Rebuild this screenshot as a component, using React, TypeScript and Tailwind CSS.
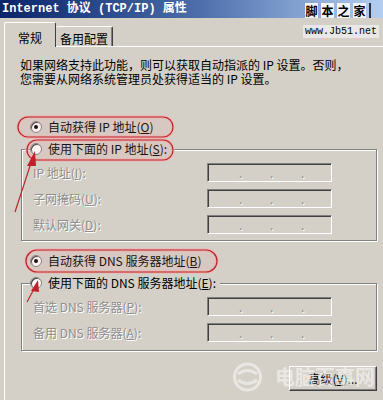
import React from 'react'

const DIS = "text-[#8e8e8e] [text-shadow:1px_1px_0_#ffffff]"

function Radio({ checked = false }: { checked?: boolean }) {
  return (
    <span className="w-[12px] h-[12px] shrink-0 rounded-full bg-white border border-[#808080] shadow-[inset_1px_1px_0_#404040] flex items-center justify-center">
      {checked && <span className="w-[4px] h-[4px] rounded-full bg-black" />}
    </span>
  )
}

function RadioRow({ checked, children }: { checked?: boolean; children: React.ReactNode }) {
  return (
    <div className="h-[20px] flex items-center gap-[6px]">
      <Radio checked={checked} />
      <span className="whitespace-nowrap">{children}</span>
    </div>
  )
}

function IpBox() {
  return (
    <div className="w-[125px] h-[19px] bg-[#d4d0c8] border-t border-l border-[#808080] border-r border-b border-r-white border-b-white shadow-[inset_1px_1px_0_#404040] flex items-center pl-[31px] gap-[27px]">
      {[0, 1, 2].map(i => (
        <span key={i} className={`w-[4px] text-[12px] leading-none ${DIS}`}>.</span>
      ))}
    </div>
  )
}

function Field({ label }: { label: React.ReactNode }) {
  return (
    <div className="flex items-center">
      <span className={`w-[174px] whitespace-nowrap ${DIS}`}>{label}</span>
      <IpBox />
    </div>
  )
}

function Group({ legend, children, bottom }: { legend: React.ReactNode; children: React.ReactNode; bottom: string }) {
  return (
    <fieldset className={`ml-[1px] w-[356px] border border-[#808080] shadow-[inset_1px_1px_0_#ffffff,1px_1px_0_#ffffff] pl-[8px] ${bottom}`}>
      <legend className="bg-[#d4d0c8] pr-[4px]">
        <RadioRow>{legend}</RadioRow>
      </legend>
      <div className="mt-[4px] pl-[3px] flex flex-col gap-[7px]">{children}</div>
    </fieldset>
  )
}

export default function App() {
  return (
    <div className="relative w-[383px] h-[400px] overflow-hidden bg-[#d4d0c8] text-[12px] leading-[14px] text-black font-['Noto_Sans_CJK_SC',sans-serif]">
      {/* title bar */}
      <div className="h-[18px] flex items-center pl-[2px] bg-gradient-to-r from-[#0a246a] via-[#4a6aa8] to-[#b4cff0]">
        <span className="text-white font-bold text-[12px] whitespace-nowrap font-['Liberation_Mono','Noto_Sans_CJK_SC',monospace]">
          Internet 协议 (TCP/IP) 属性
        </span>
      </div>

      {/* tabs */}
      <div className="h-[28px] flex items-end pl-[4px]">
        <div className="relative z-10 -mb-[1px] w-[52px] h-[25px] bg-[#d4d0c8] border-t border-l border-white border-r border-r-[#404040] rounded-t-[2px] flex items-center justify-center pt-[5px]">
          常规
        </div>
        <div className="w-[57px] h-[20px] border-t border-white border-r border-r-[#404040] shadow-[inset_-1px_0_0_#808080] rounded-t-[2px] flex items-center justify-center pt-[4px]">
          备用配置
        </div>
      </div>

      {/* page */}
      <div className="ml-[4px] h-full border-t border-l border-white pl-[15px] pt-[11px]">
        <p className="whitespace-nowrap">
          如果网络支持此功能，则可以获取自动指派的 IP 设置。否则，<br />
          您需要从网络系统管理员处获得适当的 IP 设置。
        </p>

        <div className="mt-[31px] pl-[10px]">
          <RadioRow checked>自动获得 IP 地址(<u>O</u>)</RadioRow>
        </div>
        <div className="mt-[2px]">
          <Group legend={<>使用下面的 IP 地址(<u>S</u>):</>} bottom="pb-[6px]">
            <Field label={<>IP 地址(<u>I</u>):</>} />
            <Field label={<>子网掩码(<u>U</u>):</>} />
            <Field label={<>默认网关(<u>D</u>):</>} />
          </Group>
        </div>

        <div className="mt-[10px] pl-[10px]">
          <RadioRow checked>自动获得 DNS 服务器地址(<u>B</u>)</RadioRow>
        </div>
        <div className="mt-[2px]">
          <Group legend={<>使用下面的 DNS 服务器地址(<u>E</u>):</>} bottom="pb-[8px]">
            <Field label={<>首选 DNS 服务器(<u>P</u>):</>} />
            <Field label={<>备用 DNS 服务器(<u>A</u>):</>} />
          </Group>
        </div>

        <div className="w-[357px] flex justify-end mt-[15px]">
          <button className="w-[88px] h-[25px] border-t border-l border-white border-r border-b border-r-[#404040] border-b-[#404040] shadow-[inset_-1px_-1px_0_#808080] flex items-center justify-center">
            高级(<u>V</u>)...
          </button>
        </div>
      </div>

      {/* site watermark, top right */}
      <div className="absolute top-[3px] left-[305px] flex items-center gap-[3px]">
        {['脚', '本', '之', '家'].map(c => (
          <span key={c} className="w-[13px] h-[15px] bg-[#f4f4f4] flex items-center justify-center text-[12px] font-bold">{c}</span>
        ))}
        <span className="w-[2px] h-[15px] bg-[#303040]" />
      </div>
      <div className="absolute top-[25px] left-[303px] px-[2px] h-[13px] bg-[#eeeeee]/80 flex items-center font-['Liberation_Mono',monospace] text-[10px] leading-none">
        www.Jb51.net
      </div>

      {/* site watermark, bottom right */}
      <div className="absolute top-[362px] left-[232px] flex items-center gap-[12px] opacity-50 pointer-events-none">
        <svg width="31" height="30" viewBox="0 0 31 30">
          <circle cx="15.5" cy="15" r="13" fill="none" stroke="#ffffff" strokeWidth="3" />
          <path d="M6 12 Q15.5 5 25 12 M6 18 Q15.5 25 25 18" fill="none" stroke="#ffffff" strokeWidth="3" />
        </svg>
        <span className="text-white font-bold text-[20px] leading-none whitespace-nowrap">电脑百事网</span>
      </div>

      {/* red annotations */}
      <svg className="absolute inset-0 pointer-events-none" width="383" height="400" viewBox="0 0 383 400">
        <g fill="rgba(235,150,150,0.12)" stroke="#f0b0b0" strokeWidth="3">
          <rect x="18" y="117" width="155" height="20" rx="10" />
          <rect x="27" y="140" width="146" height="20" rx="10" />
          <rect x="26" y="250" width="191" height="22" rx="11" />
        </g>
        <g fill="none" stroke="#b8262a" strokeWidth="1.2">
          <rect x="18" y="117" width="155" height="20" rx="10" />
          <rect x="27" y="140" width="146" height="20" rx="10" />
          <rect x="26" y="250" width="191" height="22" rx="11" />
          <path d="M15 212 L31 163" />
          <path d="M27 302 L34 289" />
        </g>
        <g fill="#c0202a">
          <polygon points="35,151 27,166 36,166" />
          <polygon points="38,280 31,291 39,292" />
        </g>
      </svg>
    </div>
  )
}
